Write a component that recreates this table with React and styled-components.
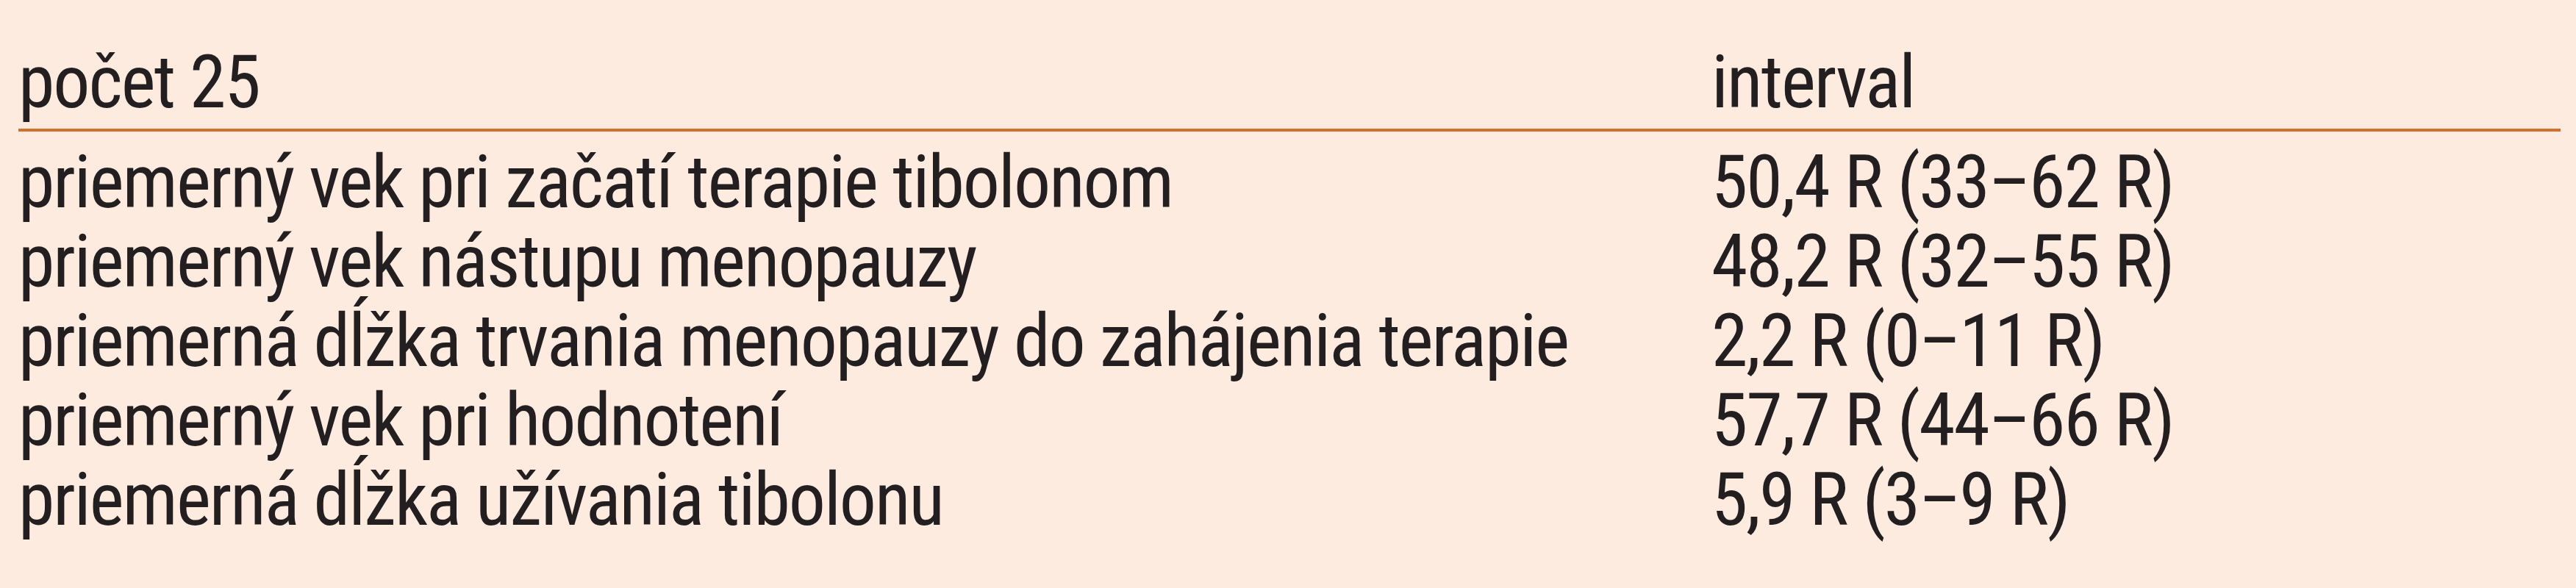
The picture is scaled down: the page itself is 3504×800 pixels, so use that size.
import React from 'react';
import styled, { createGlobalStyle } from 'styled-components';

const GlobalStyle = createGlobalStyle`
  html, body {
    margin: 0;
    background: #fdebe0;
  }
`;

const Page = styled.div`
  min-height: 800px;
  padding: 58px 21px 0 25px;
  box-sizing: border-box;
  background: #fdebe0;
  font-family: Roboto, "Liberation Sans", sans-serif;
  font-stretch: 77%;
  letter-spacing: -2px;
  color: #231f20;
`;

const Table = styled.table`
  width: 100%;
  border-collapse: collapse;
  table-layout: fixed;
`;

const HeadCell = styled.th`
  font-size: 100px;
  font-weight: 400;
  line-height: 108px;
  text-align: left;
  padding: 0 0 9px 0;
  border-bottom: 4px solid #d46f30;
  white-space: nowrap;
  width: ${({ $w }) => $w || 'auto'};
`;

const Cell = styled.td`
  font-size: 100px;
  line-height: 108px;
  padding: ${({ $first }) => ($first ? '15px 0 0 0' : '0')};
  white-space: nowrap;
  vertical-align: top;
`;

const rows = [
  ['priemerný vek pri začatí terapie tibolonom', '50,4 R (33–62 R)'],
  ['priemerný vek nástupu menopauzy', '48,2 R (32–55 R)'],
  ['priemerná dĺžka trvania menopauzy do zahájenia terapie', '2,2 R (0–11 R)'],
  ['priemerný vek pri hodnotení', '57,7 R (44–66 R)'],
  ['priemerná dĺžka užívania tibolonu', '5,9 R (3–9 R)'],
];

export default function App() {
  return (
    <Page>
      <GlobalStyle />
      <Table>
        <thead>
          <tr>
            <HeadCell $w="2303px">počet 25</HeadCell>
            <HeadCell>interval</HeadCell>
          </tr>
        </thead>
        <tbody>
          {rows.map(([label, value], i) => (
            <tr key={label}>
              <Cell $first={i === 0}>{label}</Cell>
              <Cell $first={i === 0}>{value}</Cell>
            </tr>
          ))}
        </tbody>
      </Table>
    </Page>
  );
}
